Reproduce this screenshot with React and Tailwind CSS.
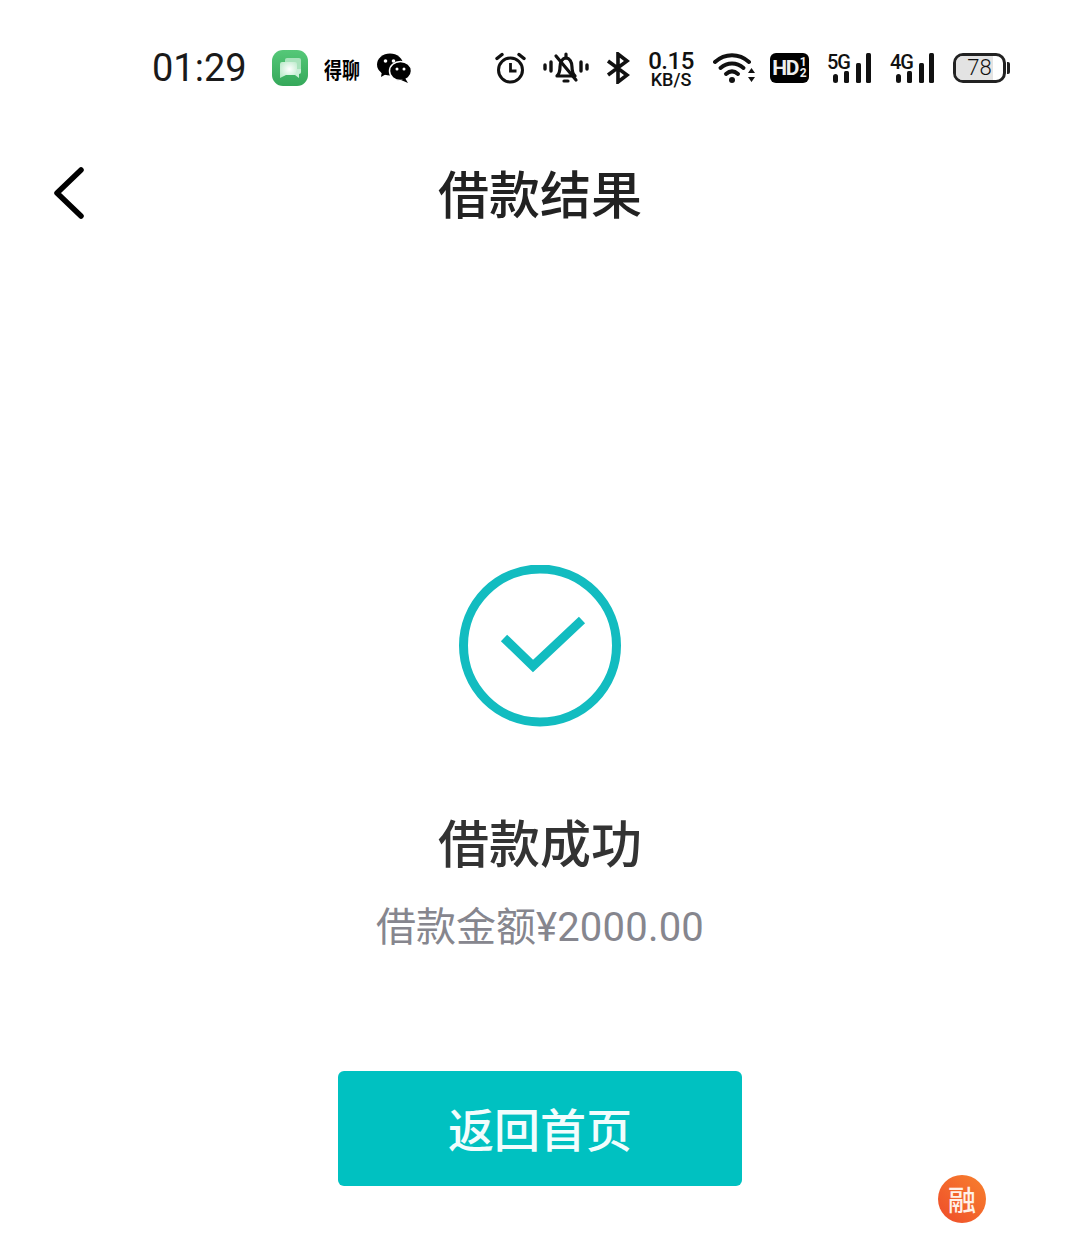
const cjk = "font-['Noto_Sans_CJK_SC','Noto_Sans',sans-serif]";

const Messages = () => (
  <svg width="36" height="36" viewBox="0 0 36 36" className="ml-[27px] shrink-0">
    <defs>
      <linearGradient id="msgBg" x1="0" y1="0" x2="0" y2="1">
        <stop offset="0" stopColor="#55c878" />
        <stop offset="1" stopColor="#35a85a" />
      </linearGradient>
      <radialGradient id="msgGlow" cx="0.55" cy="0.45" r="0.7">
        <stop offset="0" stopColor="#ffffff" />
        <stop offset="1" stopColor="#b5e8c5" />
      </radialGradient>
    </defs>
    <rect width="36" height="36" rx="11" fill="url(#msgBg)" />
    <path d="M13 10a2 2 0 0 1 2-2h12a2 2 0 0 1 2 2v11a2 2 0 0 1-2 2h-12a2 2 0 0 1-2-2z" fill="#a9e3bc" />
    <path d="M8 14a2 2 0 0 1 2-2h13a2 2 0 0 1 2 2v9a2 2 0 0 1-2 2h-9l-6 3z" fill="url(#msgGlow)" />
    <path d="M25 19h4v3a2 2 0 0 1-2 2v4l-4-3z" fill="#c9eed6" />
  </svg>
);

const WeChat = () => (
  <svg width="35" height="30" viewBox="0 0 35 30" className="ml-[17px] shrink-0" fill="#000">
    <ellipse cx="13" cy="11.500" rx="13" ry="11" />
    <path d="M5 18l-1 6 7-4z" />
    <ellipse cx="23.500" cy="18" rx="11" ry="9.500" fill="#000" stroke="#fff" strokeWidth="1.500" />
    <path d="M28 25l3 5-7-3z" />
    <circle cx="8.500" cy="8" r="1.800" fill="#fff" />
    <circle cx="16.500" cy="8" r="1.800" fill="#fff" />
    <circle cx="20" cy="16" r="1.500" fill="#fff" />
    <circle cx="27" cy="16" r="1.500" fill="#fff" />
  </svg>
);

const Alarm = () => (
  <svg width="31" height="32" viewBox="0 0 31 32" className="shrink-0" fill="none" stroke="#111" strokeWidth="3">
    <circle cx="15.500" cy="18" r="12" />
    <path d="M15.500 11v8h6" strokeWidth="2.800" />
    <path d="M2 6.500 7 2.500M29 6.500 24 2.500" strokeLinecap="round" strokeWidth="3.400" />
  </svg>
);

const BellOff = () => (
  <svg width="46" height="32" viewBox="0 0 46 32" className="ml-[17px] shrink-0" fill="none" stroke="#111">
    <path d="M14 24c2-2 3-4 3-9 0-5 2.500-9 6-9s6 4 6 9c0 5 1 7 3 9z" strokeWidth="3.200" strokeLinejoin="round" />
    <path d="M23 2v4M21 29h4M13 4l20 24" strokeWidth="3.200" strokeLinecap="round" />
    <path d="M2 13v4M8 10v9M38 10v9M44 13v4" strokeWidth="3.400" strokeLinecap="round" />
  </svg>
);

const Bluetooth = () => (
  <svg width="24" height="32" viewBox="0 0 24 32" className="ml-[17px] shrink-0" fill="none" stroke="#111" strokeWidth="3.600" strokeLinejoin="miter">
    <path d="M2 9l19 14-9 7V2l9 7L2 23" />
  </svg>
);

const Wifi = () => (
  <svg width="42" height="32" viewBox="0 0 42 32" className="ml-5 shrink-0" fill="none" stroke="#111" strokeWidth="4" strokeLinecap="round">
    <path d="M2 10C12 1 26 1 36 10" />
    <path d="M7.500 16c7-6 16-6 23 0" />
    <path d="M13 22c4-3.500 8-3.500 12 0" />
    <circle cx="19" cy="28" r="3" fill="#111" stroke="none" />
    <path d="M35 21l3.500-5 3.500 5zM35 25l3.500 5 3.500-5z" fill="#111" stroke="none" />
  </svg>
);

const Hd = () => (
  <div className="ml-[15px] flex h-[30px] w-[39px] shrink-0 items-center justify-center rounded-[6px] bg-black font-['Roboto',sans-serif] font-bold text-[#eee]">
    <span className="text-[21px] leading-none tracking-[-1.5px]">HD</span>
    <span className="ml-[2px] flex flex-col text-[12px] leading-[11px]">
      <span>1</span>
      <span>2</span>
    </span>
  </div>
);

const Signal = ({ label, className }) => (
  <div className={`relative h-[30px] w-[45px] shrink-0 ${className}`}>
    <span className="absolute left-0 top-[-2px] font-['Roboto',sans-serif] text-[20px] font-medium leading-[22px] tracking-[-1px] text-[#111]">{label}</span>
    <svg width="45" height="30" viewBox="0 0 45 30" className="absolute inset-0">
      <rect x="6" y="21" width="5" height="9" rx="2.500" fill="#111" />
      <rect x="17" y="18" width="5" height="12" rx="1.500" fill="#111" />
      <rect x="29" y="10" width="5" height="20" rx="1.500" fill="#111" />
      <rect x="39" y="0" width="5" height="30" rx="1.500" fill="#111" />
    </svg>
  </div>
);

const Battery = () => (
  <div className="relative ml-[18px] flex shrink-0 items-center">
    <div className="relative flex h-[30px] w-[53px] items-center justify-center overflow-hidden rounded-[10px] border-[3px] border-[#222] bg-white">
      <div className="absolute inset-y-0 left-0 w-[78%] bg-[#e3e3e3]"></div>
      <span className="relative font-['Roboto',sans-serif] text-[22px] font-light leading-none text-[#111]">78</span>
    </div>
    <div className="ml-px h-[12px] w-[3px] rounded-r-[2px] bg-[#222]"></div>
  </div>
);

const StatusBar = () => (
  <div className="flex h-[136px] items-center pl-[152px]">
    <span className="w-[93px] shrink-0 font-['Roboto',sans-serif] text-[38px] leading-none text-[#1a1a1a]">01:29</span>
    <Messages />
    <span className={`ml-4 w-[36px] shrink-0 scale-y-[1.2] whitespace-nowrap text-[18px] font-bold leading-none text-black ${cjk}`}>得聊</span>
    <WeChat />
    <div className="ml-[83px] flex items-center">
      <Alarm />
      <BellOff />
      <Bluetooth />
      <div className="ml-[19px] flex w-[44px] shrink-0 flex-col items-center font-['Roboto',sans-serif] font-medium text-[#111]">
        <span className="text-[24px] leading-[22px] tracking-[-0.5px]">0.15</span>
        <span className="text-[18px] leading-[15px]">KB/S</span>
      </div>
      <Wifi />
      <Hd />
      <Signal label="5G" className="ml-[18px]" />
      <Signal label="4G" className="ml-[18px]" />
      <Battery />
    </div>
  </div>
);

export default function App() {
  return (
    <div className={`relative h-[1234px] w-[1080px] overflow-hidden bg-white ${cjk}`}>
      <StatusBar />

      <div className="relative flex h-[118px] items-center justify-center">
        <button className="absolute left-[52px] top-[29px]">
          <svg width="34" height="54" viewBox="0 0 34 54" fill="none" stroke="#000" strokeWidth="5.500" strokeLinecap="round" strokeLinejoin="round">
            <path d="M29 5 5 28l24 23" />
          </svg>
        </button>
        <h1 className="mb-[6px] text-[51px] font-medium leading-none text-[#222]">借款结果</h1>
      </div>

      <div className="flex flex-col items-center pt-[311px]">
        <svg width="162" height="162" viewBox="0 0 162 162" fill="none" stroke="#12bcc0">
          <circle cx="81" cy="80.500" r="76.500" strokeWidth="9" />
          <path d="M45 73l29 28 49-46" strokeWidth="9" />
        </svg>
        <h2 className="mt-[84px] text-[51px] font-medium leading-[60px] text-[#333]">借款成功</h2>
        <p className="mt-[28px] text-[40px] leading-[50px] text-[#86868e]">
          借款金额<span className="font-['Roboto',sans-serif] tracking-[0.2px]">¥2000.00</span>
        </p>
        <button className="mt-[118px] flex h-[115px] w-[404px] items-center justify-center rounded-[6px] bg-[#00c1c1] pb-[2px] text-[46px] font-medium text-[#f2fdfd]">
          返回首页
        </button>
      </div>

      <div className="absolute left-[938px] top-[1175px] flex h-12 w-12 items-center justify-center rounded-full bg-gradient-to-tr from-[#ee4a2a] to-[#f7802d] text-[28px] font-medium leading-none text-[#fff1e8]">
        融
      </div>
    </div>
  );
}
